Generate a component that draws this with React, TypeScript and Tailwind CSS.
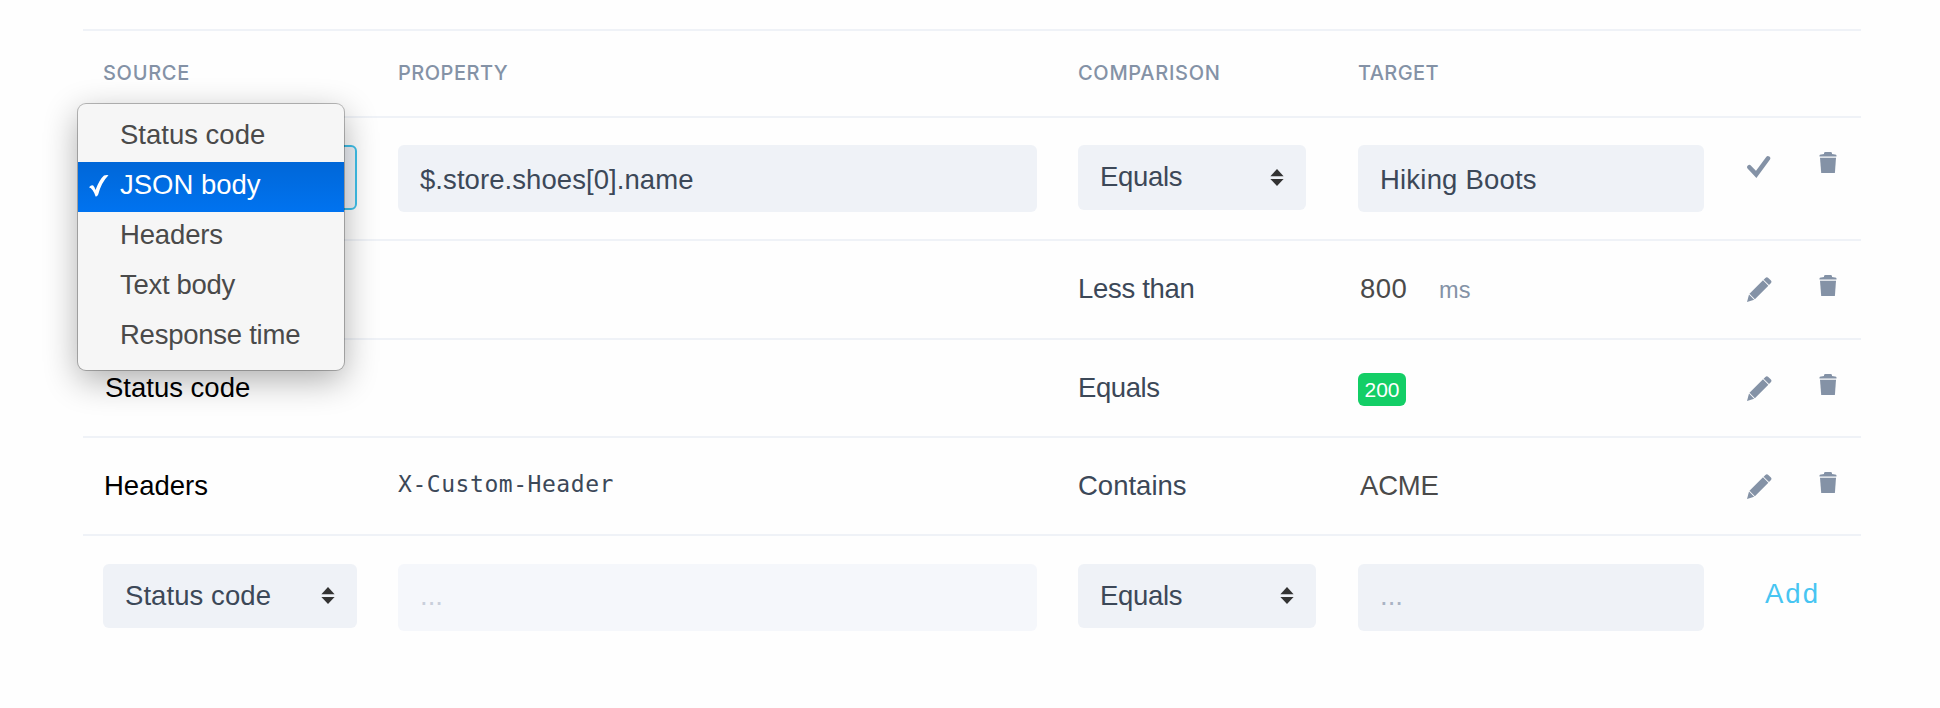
import type { ReactNode } from "react";

const SOURCES = [
  { name: "Status code", tracking: "tracking-normal" },
  { name: "JSON body", tracking: "tracking-normal" },
  { name: "Headers", tracking: "tracking-[-0.15px]" },
  { name: "Text body", tracking: "tracking-[-0.3px]" },
  { name: "Response time", tracking: "tracking-[-0.25px]" },
];

const GRID = "grid grid-cols-[295px_680px_280px_389px_1fr] items-start border-b-2 border-[#eff2f7] pl-5";

function Arrows() {
  return (
    <svg width="14" height="17" viewBox="0 0 14 17" fill="#333333" className="-mt-px shrink-0">
      <path d="M7 0L13.6 7.2H0.4Z" />
      <path d="M7 17L13.6 10H0.4Z" />
    </svg>
  );
}

function CheckIcon() {
  return (
    <svg width="24" height="22" viewBox="0 0 24 22" fill="none" stroke="#8492a6" strokeWidth="4.5" className="mt-0.5">
      <path d="M2.4 11.2L9.2 18.4L21 2.4" strokeLinecap="round" />
    </svg>
  );
}

function PencilIcon() {
  return (
    <svg width="25" height="25" viewBox="0 0 25 25" fill="#8492a6">
      <path d="M16.6 2.7L18.4 0.9Q19.8 -0.5 21.3 0.9L23.7 3.3Q25.2 4.8 23.8 6.2L22 8.1Z" />
      <path d="M16 3.3L21.4 8.7L7.9 22.2L2.5 16.8Z" />
      <path d="M2 17.5L7.2 22.7L0 25Z" />
    </svg>
  );
}

function TrashIcon() {
  return (
    <svg width="18" height="21" viewBox="0 0 18 21" fill="#8492a6">
      <path d="M0.5 4.6V3.4Q0.6 2.6 2 2.4L5 2V1.2Q5.1 0 6.4 0H11.6Q12.9 0 13 1.2V2L16 2.4Q17.4 2.6 17.5 3.4V4.6Z" />
      <path d="M1 5.8H17L15.9 21H2.2Z" />
    </svg>
  );
}

function Actions({ first }: { first: ReactNode }) {
  return (
    <div className="flex items-start pt-[34px]">
      <div className="w-[72px] pt-0.5">{first}</div>
      <TrashIcon />
    </div>
  );
}

function Select({ label, size, labelClass }: { label: string; size: string; labelClass: string }) {
  return (
    <div className={`flex items-center justify-between rounded-md bg-[#eff2f7] px-[22px] ${size}`}>
      <span className={labelClass}>{label}</span>
      <Arrows />
    </div>
  );
}

function SourceMenu() {
  return (
    <div className="absolute top-[-41px] left-[-25px] z-10 w-[266px] rounded-lg bg-[#f6f6f6] py-2 shadow-[0_0_0_1px_rgba(0,0,0,0.26),0_10px_34px_rgba(0,0,0,0.32)]">
      {SOURCES.map(({ name, tracking }) =>
        name === "JSON body" ? (
          <div
            key={name}
            className="flex h-[50px] items-center bg-linear-to-b from-[#0067d8] to-[#0073f0] text-white"
          >
            <svg width="20" height="22" viewBox="0 0 20 22" className="-mt-0.5 mr-[11px] ml-[11px]" fill="white">
              <path d="M0 12.2Q2.4 9.7 4.2 10.6Q5.6 11.8 6.5 15Q10.5 4.5 15 0.6Q17 -0.2 19.5 0.2Q12.2 7.5 9.2 19.5Q8 22 6.6 21.4Q4 13.5 0 12.2Z" />
            </svg>
            <span className={`-mt-1 ${tracking}`}>{name}</span>
          </div>
        ) : (
          <div key={name} className="flex h-[50px] items-center pl-[42px] text-[#4a4a4a]">
            <span className={`-mt-1 ${tracking}`}>{name}</span>
          </div>
        ),
      )}
    </div>
  );
}

function TextCell({ children, color }: { children?: ReactNode; color: string }) {
  return <div className={`pt-7 leading-10 ${color}`}>{children}</div>;
}

export default function App() {
  return (
    <main className="h-[708px] w-[1940px] overflow-hidden bg-[#fefefe] pt-[29px] pl-[83px] font-['Liberation_Sans',Arial,sans-serif] text-[27.5px] text-[#3c4858]">
      <div className="w-[1778px] border-t-2 border-[#eff2f7]">
        <div className={`${GRID} h-[87px] font-['Inter',sans-serif] text-[20px] font-medium text-[#8492a6]`}>
          <div className="pt-7 leading-[28px] tracking-[0.7px]">SOURCE</div>
          <div className="pt-7 leading-[28px] tracking-[0.5px]">PROPERTY</div>
          <div className="pt-7 leading-[28px] tracking-[0.7px]">COMPARISON</div>
          <div className="pt-7 leading-[28px] tracking-[0.4px]">TARGET</div>
        </div>

        <div className={`${GRID} h-[123px]`}>
          <div className="relative mt-[27px] h-[65px] w-[254px] rounded-md border-2 border-[#3fc0ea] bg-[#eff2f7]">
            <div className="absolute -top-0.5 -left-0.5">
              <SourceMenu />
            </div>
          </div>
          <div className="mt-[27px] flex h-[67px] w-[639px] items-center rounded-md bg-[#eff2f7] pt-0.5 pl-[22px] tracking-[0.07px]">
            $.store.shoes[0].name
          </div>
          <div className="pt-[27px]">
            <Select label="Equals" size="h-[65px] w-[228px]" labelClass="-mt-0.5 tracking-[-0.3px]" />
          </div>
          <div className="mt-[27px] flex h-[67px] w-[346px] items-center rounded-md bg-[#eff2f7] pt-0.5 pl-[22px] tracking-[0.2px]">
            Hiking Boots
          </div>
          <Actions first={<CheckIcon />} />
        </div>

        <div className={`${GRID} h-[99px]`}>
          <div />
          <div />
          <TextCell color="text-[#3c4858] tracking-[-0.3px]">Less than</TextCell>
          <TextCell color="text-[#4a4a4a]">
            <span className="pl-0.5 tracking-[0.4px]">800</span>
            <span className="ml-8 text-[23.5px] text-[#8492a6]">ms</span>
          </TextCell>
          <Actions first={<PencilIcon />} />
        </div>

        <div className={`${GRID} h-[98px]`}>
          <TextCell color="pl-0.5 text-black">Status code</TextCell>
          <div />
          <TextCell color="text-[#3c4858] tracking-[-0.4px]">Equals</TextCell>
          <div className="mt-[33px] flex h-[33px] w-12 items-center justify-center rounded-md bg-[#13ce66] text-[21px] text-white">
            200
          </div>
          <Actions first={<PencilIcon />} />
        </div>

        <div className={`${GRID} h-[98px]`}>
          <TextCell color="pl-px text-black">Headers</TextCell>
          <div className="pt-[26px] font-['DejaVu_Sans_Mono',monospace] text-[23px] leading-10 tracking-[0.55px]">
            X-Custom-Header
          </div>
          <TextCell color="text-[#3c4858]">Contains</TextCell>
          <TextCell color="pl-0.5 text-[#4a4a4a] tracking-[-0.2px]">ACME</TextCell>
          <Actions first={<PencilIcon />} />
        </div>

        <div className="grid grid-cols-[295px_680px_280px_389px_1fr] items-start pt-7 pl-5">
          <Select label="Status code" size="h-16 w-[254px]" labelClass="tracking-[0.07px]" />
          <div className="flex h-[67px] w-[639px] items-center rounded-md bg-[#f5f7fb] pb-1 pl-[22px] text-[#c9cfdb]">...</div>
          <Select label="Equals" size="h-16 w-[238px]" labelClass="tracking-[-0.3px]" />
          <div className="flex h-[67px] w-[346px] items-center rounded-md bg-[#eff2f7] pb-1 pl-[22px] text-[#a9b3c4]">...</div>
          <div className="pt-2.5 pl-[18px] leading-10 tracking-[2px] text-[#47c5f2]">Add</div>
        </div>
      </div>
    </main>
  );
}
